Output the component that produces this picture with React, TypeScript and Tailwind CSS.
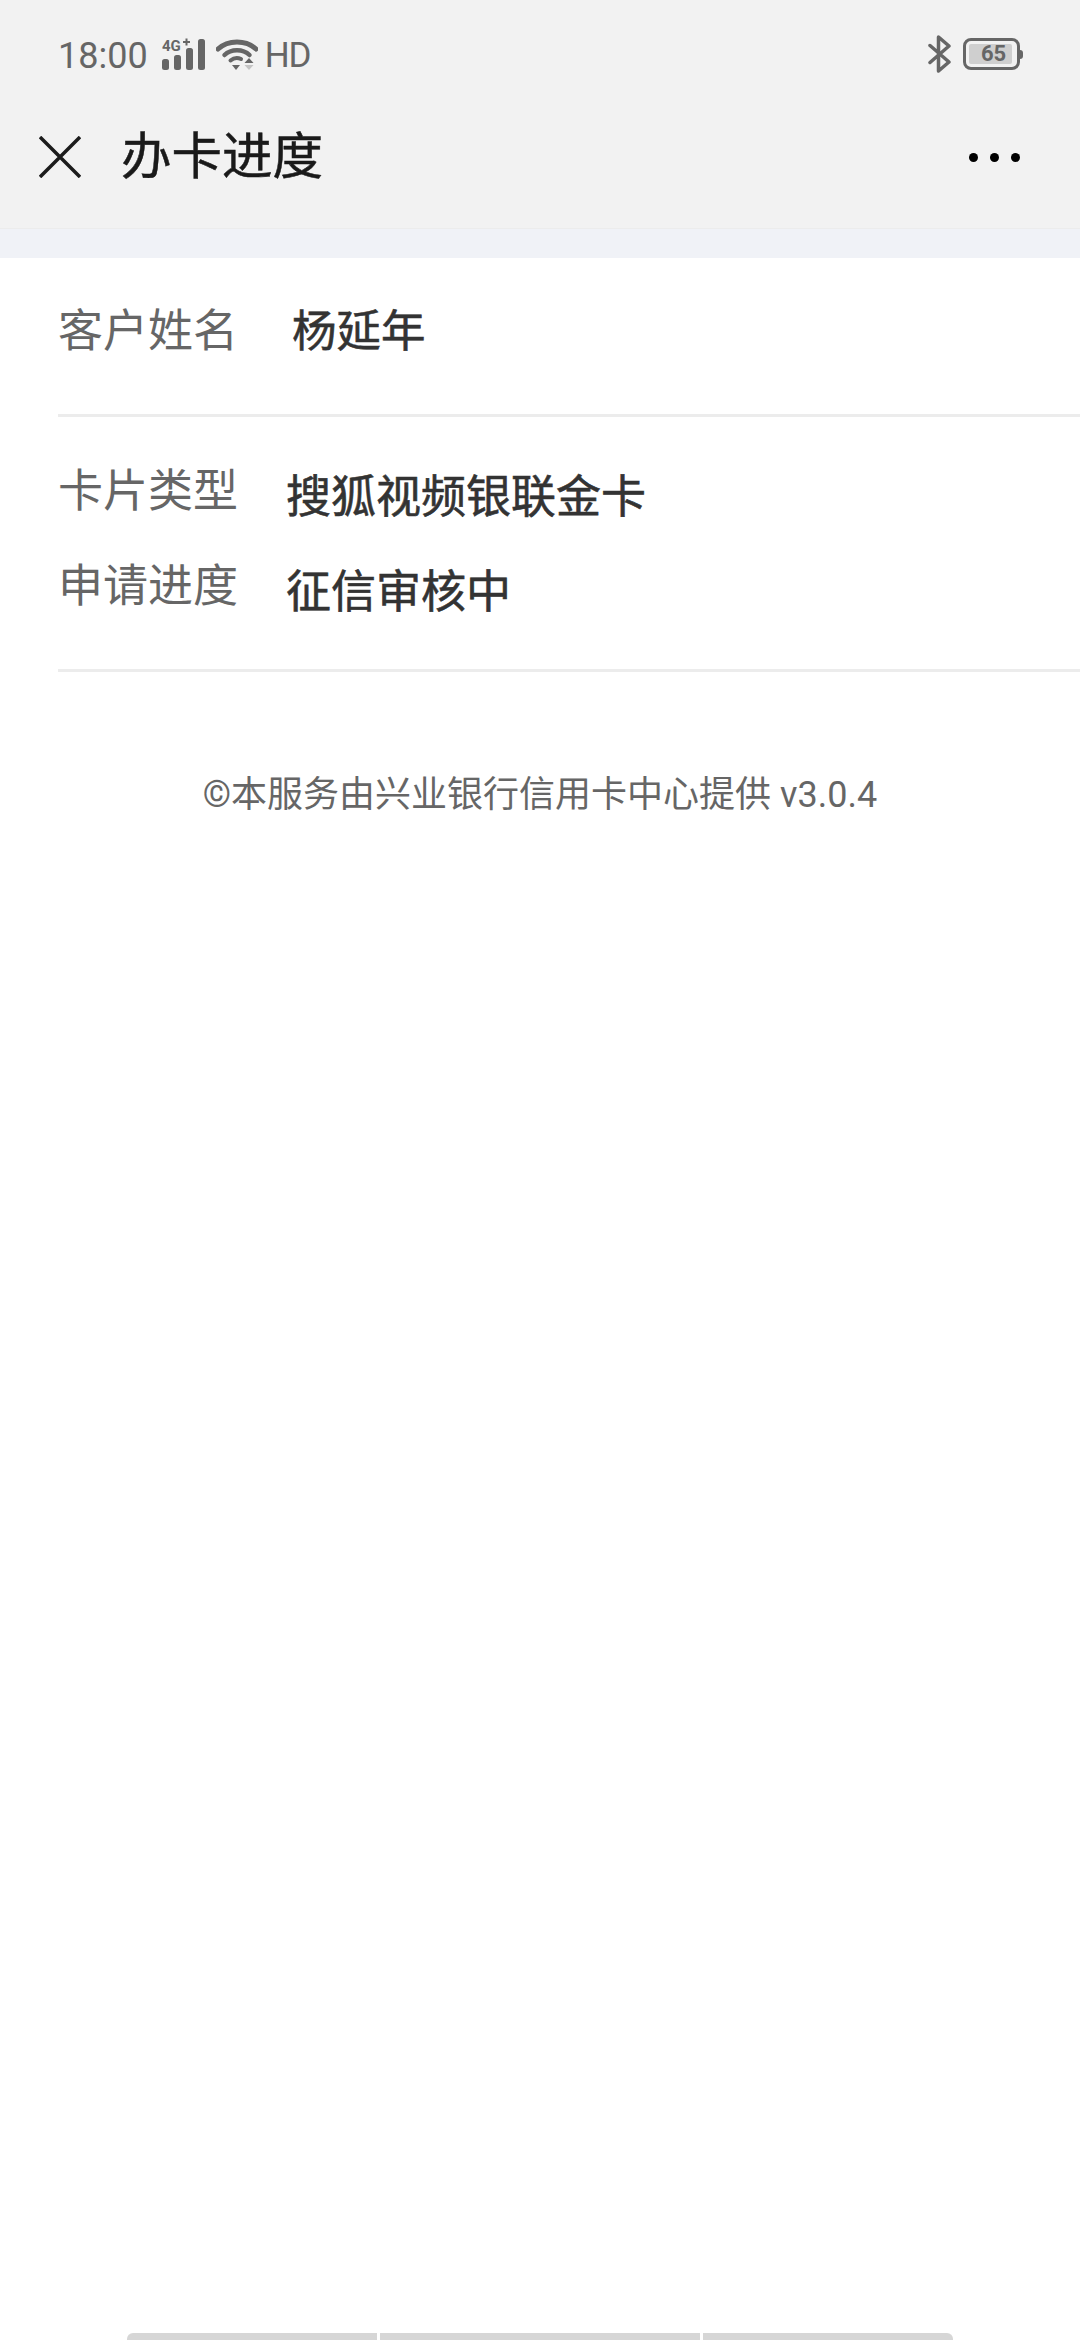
import * as React from "react";

const CJK = "font-['Roboto','Noto_Sans_CJK_SC',sans-serif]";

function SignalIcon() {
  return (
    <svg width="43" height="32" viewBox="0 0 43 32" className="ml-[14px]">
      <text x="0" y="13" fontSize="15" fontWeight="700" fill="#666" fontFamily="Roboto">4G</text>
      <path d="M21 3h2.5V0.5h2V3H28v2h-2.5v2.5h-2V5H21z" fill="#666" />
      <rect x="0" y="21" width="7" height="11" rx="2.5" fill="#666" />
      <rect x="12" y="17" width="7" height="15" rx="2.5" fill="#666" />
      <rect x="24" y="10" width="7" height="22" rx="2.5" fill="#666" />
      <rect x="36" y="1" width="7" height="31" rx="2.5" fill="#666" />
    </svg>
  );
}

function WifiIcon() {
  return (
    <svg width="42" height="33" viewBox="0 0 42 33" className="ml-[11px]">
      <path d="M2 11C12 1.500 30 1.500 40 11" fill="none" stroke="#666" strokeWidth="5" strokeLinecap="round" />
      <path d="M8.500 17C15 10.500 27 10.500 33.500 17" fill="none" stroke="#666" strokeWidth="4.500" strokeLinecap="round" />
      <path d="M14.500 22.500C18 19.500 22 19.500 25 21" fill="none" stroke="#666" strokeWidth="4" strokeLinecap="round" />
      <path d="M16 27h8l-4 5z" fill="#666" />
      <path d="M33 20l4.500 5h-9z" fill="#666" />
      <path d="M28.500 27h9l-4.500 5z" fill="#c4c4c4" />
    </svg>
  );
}

function BluetoothIcon() {
  return (
    <svg width="24" height="38" viewBox="0 0 24 38">
      <path d="M2 10.500L21 27L10.500 36V2L21 11L2 27.500" fill="none" stroke="#666" strokeWidth="3.500" strokeLinejoin="round" strokeLinecap="round" />
    </svg>
  );
}

function BatteryIcon() {
  return (
    <div className="ml-[11px] flex items-center">
      <div className="flex h-[32px] w-[57px] items-center rounded-[8px] border-[3px] border-[#666] p-[3px]">
        <div className="flex h-full w-[43px] items-center justify-center rounded-[2px] bg-[#cfcfcf] pl-[6px] text-[22px] font-bold leading-none text-[#666]">
          65
        </div>
      </div>
      <div className="h-[9px] w-[3px] rounded-r-full bg-[#666]" />
    </div>
  );
}

function CloseIcon() {
  return (
    <svg width="42" height="42" viewBox="0 0 42 42" className="shrink-0">
      <path d="M1 1L41 41M41 1L1 41" fill="none" stroke="#1c1c1c" strokeWidth="3.500" />
    </svg>
  );
}

function StatusBar() {
  return (
    <div className="flex h-[74px] items-start pl-[58px] pr-[57px] pt-[35px]">
      <div className="flex h-[38px] items-center">
        <span className="mt-[3px] text-[36px] leading-none text-[#666]">18:00</span>
        <SignalIcon />
        <WifiIcon />
        <span className="ml-[7px] mt-[2px] text-[35px] leading-none tracking-[-1px] text-[#666]">HD</span>
      </div>
      <div className="ml-auto flex h-[38px] items-center">
        <BluetoothIcon />
        <BatteryIcon />
      </div>
    </div>
  );
}

function NavBar() {
  return (
    <div className="flex h-[154px] items-start pl-[39px] pr-[60px] pt-[53px]">
      <div className="flex h-[60px] items-center">
        <CloseIcon />
        <h1 className="ml-[40px] text-[50.500px] leading-[60px] text-[#1a1a1a] [-webkit-text-stroke:0.5px_#1a1a1a]">办卡进度</h1>
      </div>
      <div className="ml-auto mt-[-7px] flex h-[74px] items-center gap-[12px]">
        <span className="size-[9px] rounded-full bg-black" />
        <span className="size-[9px] rounded-full bg-black" />
        <span className="size-[9px] rounded-full bg-black" />
      </div>
    </div>
  );
}

function Row({ label, value, shift }: { label: string; value: string; shift?: boolean }) {
  return (
    <div className="flex items-start">
      <div className="w-[228px] text-[45px] leading-[60px] text-[#666]">{label}</div>
      <div
        className={
          shift
            ? "ml-[6px] text-[44.500px] leading-[60px] text-[#333] [-webkit-text-stroke:0.6px_#333]"
            : "mt-[6px] text-[45px] leading-[60px] text-[#333] [-webkit-text-stroke:0.6px_#333]"
        }
      >
        {value}
      </div>
    </div>
  );
}

export default function App() {
  return (
    <div className={`flex h-[2340px] w-[1080px] flex-col overflow-hidden bg-white ${CJK}`}>
      <div className="border-b border-[#ececec] bg-[#f2f2f2]">
        <StatusBar />
        <NavBar />
      </div>
      <div className="h-[29px] bg-[#f0f2f7]" />

      <div className="pl-[58px]">
        <div className="border-b-[3px] border-[#ececec] pb-[52px] pt-[44px]">
          <Row label="客户姓名" value="杨延年" shift />
        </div>
        <div className="flex flex-col gap-[29px] border-b-[3px] border-[#ececec] pb-[46px] pt-[45px]">
          <Row label="卡片类型" value="搜狐视频银联金卡" />
          <Row label="申请进度" value="征信审核中" />
        </div>
      </div>

      <p className="mt-[98px] text-center text-[36px] leading-[50px] text-[#666]">
        ©本服务由兴业银行信用卡中心提供 v3.0.4
      </p>

      <div className="mt-auto flex justify-center gap-[3px]">
        <div className="h-[7px] w-[250px] rounded-tl-[6px] bg-[#d6d6d6]" />
        <div className="h-[7px] w-[320px] bg-[#d6d6d6]" />
        <div className="h-[7px] w-[250px] rounded-tr-[6px] bg-[#d6d6d6]" />
      </div>
    </div>
  );
}
